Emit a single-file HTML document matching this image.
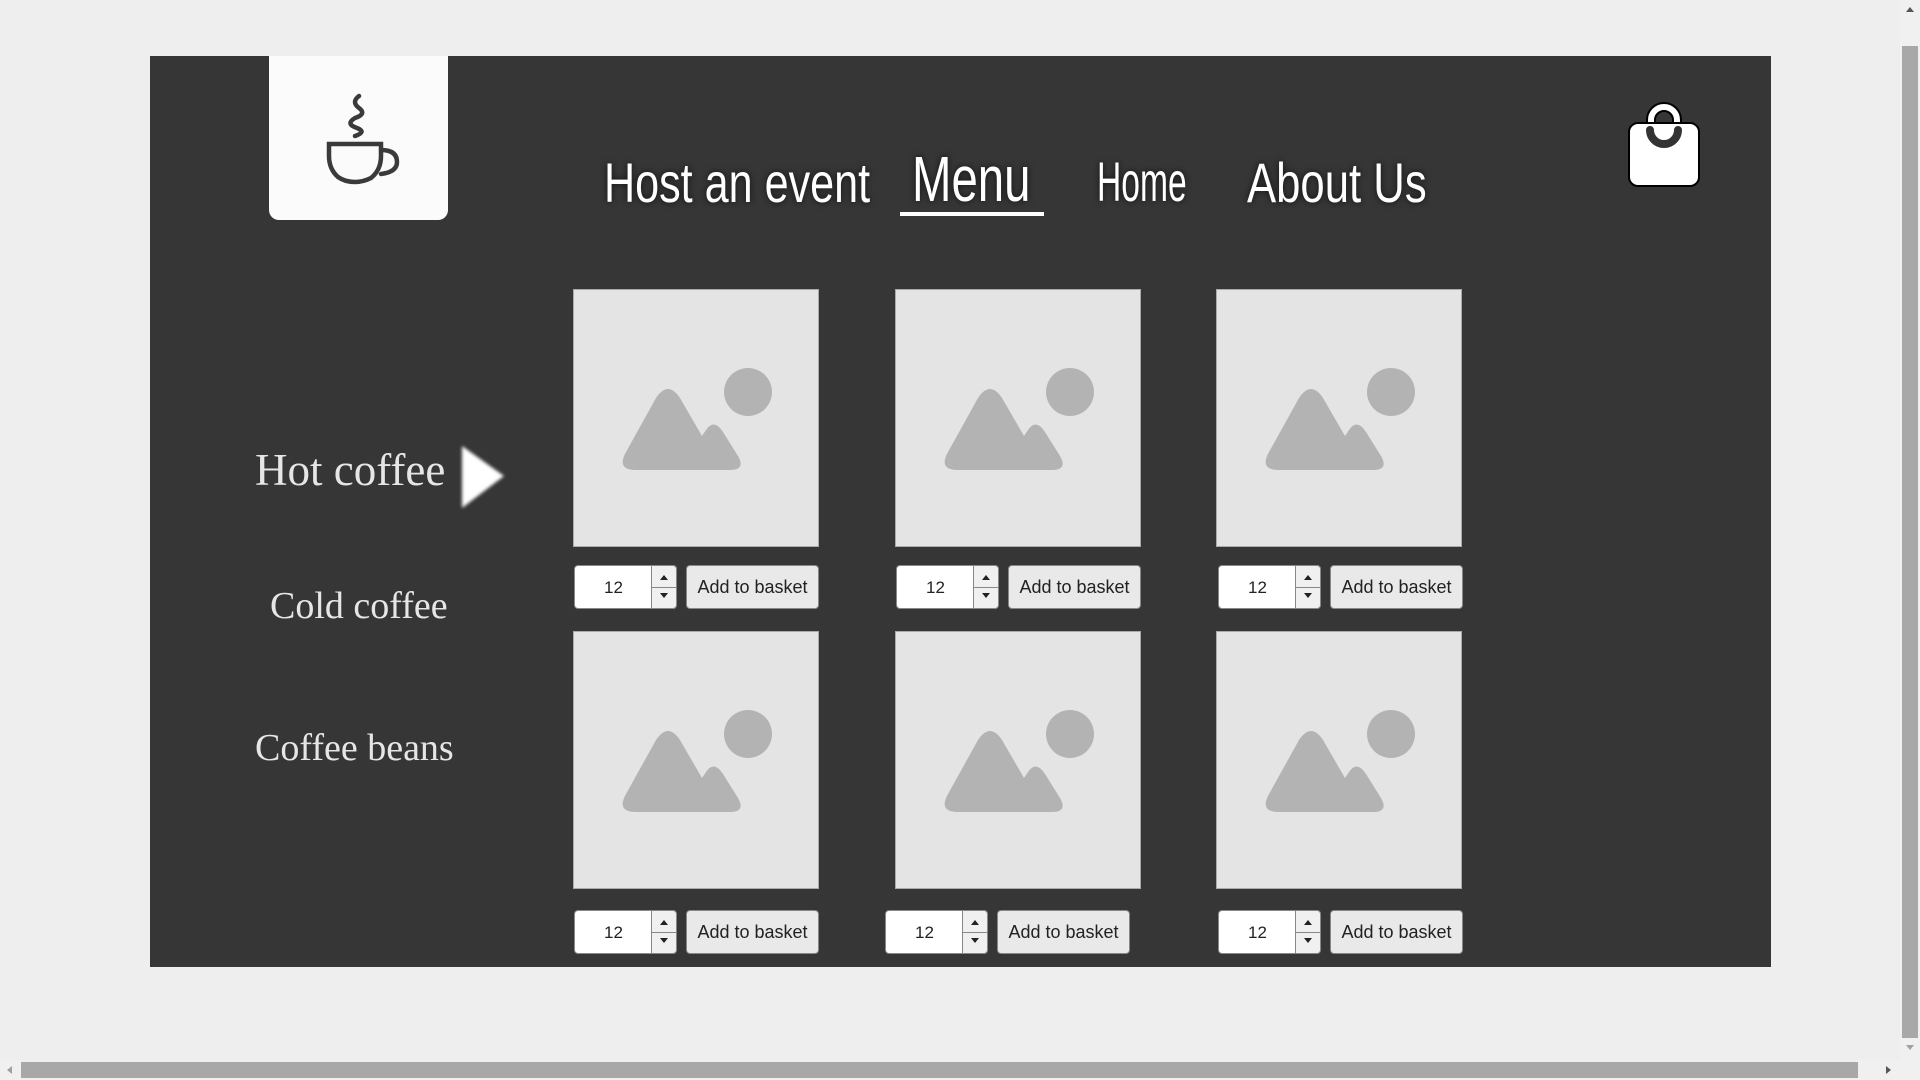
<!DOCTYPE html>
<html><head><meta charset="utf-8"><style>
*{margin:0;padding:0;box-sizing:border-box}
body{width:1920px;height:1080px;background:#eeeeee;position:relative;overflow:hidden;font-family:"Liberation Sans",sans-serif}
.panel{position:absolute;left:150px;top:56px;width:1621px;height:911px;background:#363636}
.logo{position:absolute;left:269px;top:56px;width:179px;height:164px;background:#fbfbfb;border-radius:0 0 10px 10px}
.nav{position:absolute;color:#fff;font-family:"Liberation Sans",sans-serif;line-height:1;white-space:nowrap;transform-origin:0 100%;text-shadow:0 0 8px rgba(0,0,0,.7)}
.side{position:absolute;color:#e6e6e6;font-family:"Liberation Serif",serif;line-height:1;white-space:nowrap}
.card{position:absolute;width:246px;height:258px;background:#e4e4e4;border:1px solid #aaa}
.card svg{position:absolute;left:0;top:0}
.num{position:absolute;width:103px;height:44px;background:#fff;border:1px solid #888;border-radius:4px;font-size:17px;color:#222}
.num span{position:absolute;left:0;width:77px;top:12px;text-align:center}
.spin{position:absolute;left:76px;top:-1px;width:26px;height:44px;border:1px solid #888;border-radius:0 4px 4px 0;background:#f0f0f0}
.spin i{position:absolute;left:8px;width:0;height:0;border-left:4px solid transparent;border-right:4px solid transparent}
.spin .u{top:9px;border-bottom:5px solid #222}
.spin .d{top:27px;border-top:5px solid #222}
.spin b{position:absolute;left:0;right:0;top:21px;border-top:1px solid #888}
.btn{position:absolute;width:133px;height:44px;background:#e9e9e9;border:1px solid #888;border-radius:4px;font-size:18px;color:#222;text-align:center;line-height:42px}
</style></head><body>
<div class="panel"></div>
<div class="logo">
<svg width="179" height="164" viewBox="0 0 179 164">
<g fill="none" stroke="#3a3a3a" stroke-width="4.5" stroke-linecap="round">
<path d="M90 40 Q82 46 90 52 Q98 58 86 62 Q76 68 88 72 Q98 76 86 80"/>
<path d="M60 88 L112 88 L112 100 Q112 114 102 122 Q94 126 86 126 Q76 126 69 121 Q60 113 60 100 Z"/>
<path d="M112 94 Q128 94 128 106 Q128 116 112 118"/>
</g>
</svg>
</div>
<div class="nav" style="left:604px;top:155px;font-size:56px;transform:scaleX(.77)">Host an event</div>
<div class="nav" style="left:912px;top:147px;font-size:64px;transform:scaleX(.74)">Menu</div>
<div style="position:absolute;left:900px;top:212px;width:144px;height:4px;background:#fff"></div>
<div class="nav" style="left:1097px;top:154px;font-size:56px;transform:scaleX(.6)">Home</div>
<div class="nav" style="left:1247px;top:155px;font-size:56px;transform:scaleX(.78)">About Us</div>
<svg style="position:absolute;left:1626px;top:102px" width="76" height="86" viewBox="0 0 76 86">
<path d="M25 22 L25 18 A13 13 0 0 1 51 18 L51 22" fill="none" stroke="#000" stroke-width="10"/>
<path d="M25 22 L25 18 A13 13 0 0 1 51 18 L51 22" fill="none" stroke="#fff" stroke-width="6"/>
<rect x="3" y="21" width="70" height="63" rx="9" fill="#fff" stroke="#000" stroke-width="2"/>
<path d="M24 28 A14 14 0 0 0 52 28" fill="none" stroke="#333" stroke-width="8" stroke-linecap="round"/>
</svg>
<div class="side" style="left:255px;top:448px;font-size:45px">Hot coffee</div>
<svg style="position:absolute;left:454px;top:440px" width="60" height="76"><polygon points="8,6 50,36 8,68" fill="#fff" style="filter:blur(1.5px)"/></svg>
<div class="side" style="left:270px;top:587px;font-size:38px">Cold coffee</div>
<div class="side" style="left:255px;top:729px;font-size:38px">Coffee beans</div>

<div class="card" style="left:573px;top:289px"><svg width="246" height="258"><circle cx="174" cy="102" r="24" fill="#b3b3b3"/><path d="M62 180 Q42 180 52 162 L82 108 Q94 90 106 108 L128 146 L132 140 Q140 128 149 142 L164 166 Q172 180 156 180 Z" fill="#b3b3b3"/></svg></div>
<div class="card" style="left:895px;top:289px"><svg width="246" height="258"><circle cx="174" cy="102" r="24" fill="#b3b3b3"/><path d="M62 180 Q42 180 52 162 L82 108 Q94 90 106 108 L128 146 L132 140 Q140 128 149 142 L164 166 Q172 180 156 180 Z" fill="#b3b3b3"/></svg></div>
<div class="card" style="left:1216px;top:289px"><svg width="246" height="258"><circle cx="174" cy="102" r="24" fill="#b3b3b3"/><path d="M62 180 Q42 180 52 162 L82 108 Q94 90 106 108 L128 146 L132 140 Q140 128 149 142 L164 166 Q172 180 156 180 Z" fill="#b3b3b3"/></svg></div>
<div class="card" style="left:573px;top:631px"><svg width="246" height="258"><circle cx="174" cy="102" r="24" fill="#b3b3b3"/><path d="M62 180 Q42 180 52 162 L82 108 Q94 90 106 108 L128 146 L132 140 Q140 128 149 142 L164 166 Q172 180 156 180 Z" fill="#b3b3b3"/></svg></div>
<div class="card" style="left:895px;top:631px"><svg width="246" height="258"><circle cx="174" cy="102" r="24" fill="#b3b3b3"/><path d="M62 180 Q42 180 52 162 L82 108 Q94 90 106 108 L128 146 L132 140 Q140 128 149 142 L164 166 Q172 180 156 180 Z" fill="#b3b3b3"/></svg></div>
<div class="card" style="left:1216px;top:631px"><svg width="246" height="258"><circle cx="174" cy="102" r="24" fill="#b3b3b3"/><path d="M62 180 Q42 180 52 162 L82 108 Q94 90 106 108 L128 146 L132 140 Q140 128 149 142 L164 166 Q172 180 156 180 Z" fill="#b3b3b3"/></svg></div>

<div class="num" style="left:574px;top:565px"><span>12</span><div class="spin"><i class="u"></i><b></b><i class="d"></i></div></div>
<div class="btn" style="left:686px;top:565px">Add to basket</div>
<div class="num" style="left:896px;top:565px"><span>12</span><div class="spin"><i class="u"></i><b></b><i class="d"></i></div></div>
<div class="btn" style="left:1008px;top:565px">Add to basket</div>
<div class="num" style="left:1218px;top:565px"><span>12</span><div class="spin"><i class="u"></i><b></b><i class="d"></i></div></div>
<div class="btn" style="left:1330px;top:565px">Add to basket</div>
<div class="num" style="left:574px;top:910px"><span>12</span><div class="spin"><i class="u"></i><b></b><i class="d"></i></div></div>
<div class="btn" style="left:686px;top:910px">Add to basket</div>
<div class="num" style="left:885px;top:910px"><span>12</span><div class="spin"><i class="u"></i><b></b><i class="d"></i></div></div>
<div class="btn" style="left:997px;top:910px">Add to basket</div>
<div class="num" style="left:1218px;top:910px"><span>12</span><div class="spin"><i class="u"></i><b></b><i class="d"></i></div></div>
<div class="btn" style="left:1330px;top:910px">Add to basket</div>

<div style="position:absolute;left:1900px;top:0;width:20px;height:1060px;background:#f0f0f0"></div>
<div style="position:absolute;left:1902px;top:46px;width:16px;height:992px;background:#a8a8a8"></div>
<div style="position:absolute;left:1906px;top:7px;border-left:4px solid transparent;border-right:4px solid transparent;border-bottom:5px solid #555"></div>
<div style="position:absolute;left:1906px;top:1045px;border-left:4px solid transparent;border-right:4px solid transparent;border-top:5px solid #a0a0a0"></div>
<div style="position:absolute;left:0;top:1060px;width:1920px;height:20px;background:#f0f0f0"></div>
<div style="position:absolute;left:21px;top:1062px;width:1837px;height:16px;background:#a8a8a8"></div>
<div style="position:absolute;left:7px;top:1066px;border-top:4px solid transparent;border-bottom:4px solid transparent;border-right:5px solid #a0a0a0"></div>
<div style="position:absolute;left:1886px;top:1066px;border-top:4px solid transparent;border-bottom:4px solid transparent;border-left:5px solid #555"></div>
</body></html>
